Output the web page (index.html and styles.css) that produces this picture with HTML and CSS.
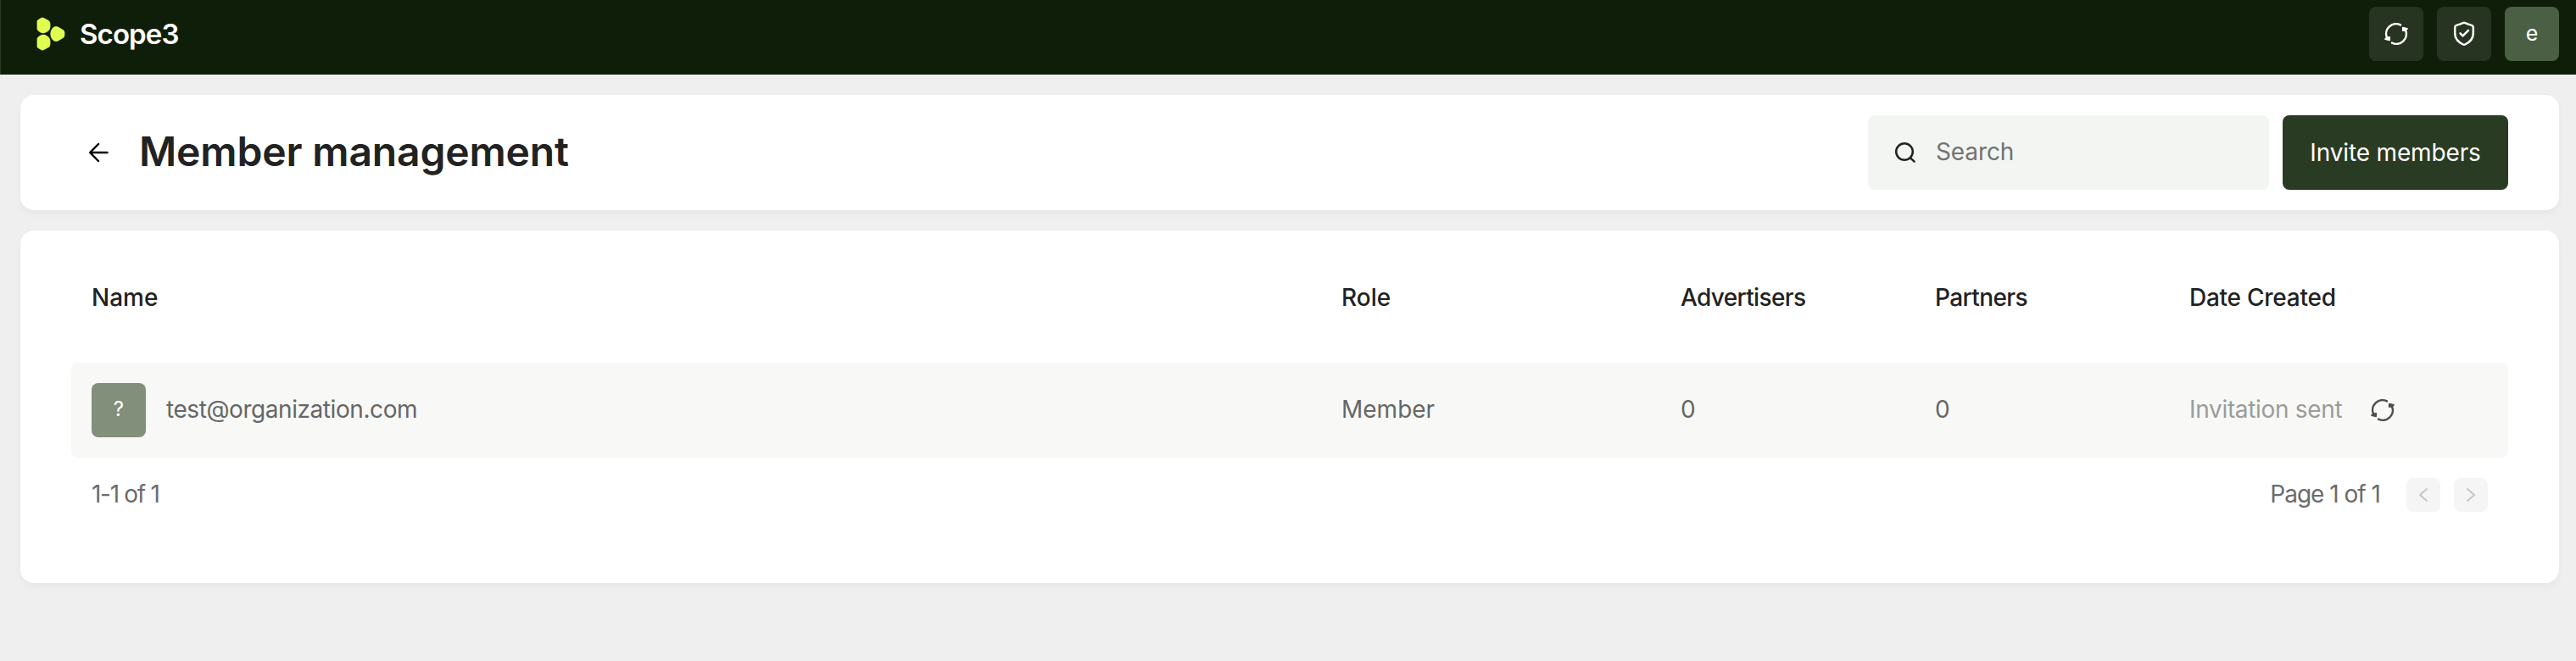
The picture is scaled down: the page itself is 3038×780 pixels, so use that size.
FILE: index.html
```html
<!DOCTYPE html>
<html lang="en">
<head>
    <meta charset="UTF-8">
    <meta name="viewport" content="width=device-width, initial-scale=1.0">
    <title>Scope3 - Member management</title>
    <link rel="stylesheet" href="styles.css">
</head>
<body>

    <header class="topbar">
        <a class="brand" href="#">
            <svg class="brand-logo" viewBox="43 20 34 40" width="34" height="40">
                <path d="M43.6 25.3Q43.6 24.2 44.5 23.6L48.5 21.1Q50 20.1 51.6 20.9L56.8 23.7Q59.4 25.1 59.4 28V31.5Q59.2 35.5 55.4 37.8Q51.2 40.3 47.4 38.2Q44.5 36.6 43.6 34.6Z"/>
                <path d="M43.6 54.7Q43.6 55.8 44.5 56.4L48.5 58.9Q50 59.9 51.6 59.1L56.8 56.3Q59.4 54.9 59.4 52V48.5Q59.2 44.5 55.4 42.2Q51.2 39.7 47.4 41.8Q44.5 43.4 43.6 45.4Z"/>
                <path d="M59.3 40Q59.3 35.8 62 33.1Q65 29.8 68.7 31.7L74.3 35Q76.3 36.2 76.3 38.3V41.7Q76.3 43.8 74.3 45L68.7 48.3Q65 50.2 62 46.9Q59.3 44.2 59.3 40Z"/>
            </svg>
            <span class="brand-name">Scope3</span>
        </a>
        <nav class="topbar-actions">
            <button class="icon-button" aria-label="Refresh">
                <svg class="icon" viewBox="-16 -16 32 32" width="32" height="32">
                    <path d="M-11 4.4A11.7 11.7 0 0 1 5 -10.6M11 -4.4A11.7 11.7 0 0 1 -5 10.6"/>
                    <path class="arrowhead" d="M7.8 -7.4L13 -6.2L10.9 -4.2L7.7 -3.8ZM-7.8 7.4L-13 6.2L-10.9 4.2L-7.7 3.8Z"/>
                </svg>
            </button>
            <button class="icon-button" aria-label="Security">
                <svg class="icon" viewBox="-16 -16 32 32" width="32" height="32">
                    <path d="M-1.4 -12.9Q0 -13.5 1.4 -12.9Q5 -11.3 9 -10.1Q10.8 -9.5 10.8 -7.6V-.5C10.8 6.3 5.4 10.4 1.2 12.5Q0 13.1 -1.2 12.5C-5.4 10.4 -10.8 6.3 -10.8 -.5V-7.6Q-10.8 -9.5 -9 -10.1Q-5 -11.3 -1.4 -12.9Z"/>
                    <path d="M-4.5 -.7L-1.5 2.3L5 -4.2"/>
                </svg>
            </button>
            <button class="icon-button user-button">e</button>
        </nav>
    </header>

    <main>
        <section class="card title-card">
            <a class="back-link" href="#" aria-label="Back">
                <svg class="icon" viewBox="0 0 32 32" width="32" height="32">
                    <path d="M26.5 16H6.5M16 6L6.2 16L16 26"/>
                </svg>
            </a>
            <h1>Member management</h1>
            <label class="search">
                <svg class="icon" viewBox="0 0 32 32" width="32" height="32">
                    <circle cx="14" cy="15" r="9.8"/>
                    <path d="M21 22.3L25.6 26.7"/>
                </svg>
                <input type="text" placeholder="Search">
            </label>
            <button class="invite-button">Invite members</button>
        </section>

        <section class="card table-card">
            <div class="row table-head">
                <span>Name</span>
                <span>Role</span>
                <span class="advertisers">Advertisers</span>
                <span class="partners">Partners</span>
                <span class="date">Date Created</span>
            </div>
            <div class="row member-row">
                <div class="member">
                    <span class="avatar">?</span>
                    <span class="email">test@organization.com</span>
                </div>
                <span>Member</span>
                <span>0</span>
                <span>0</span>
                <div class="status">
                    <span>Invitation sent</span>
                    <svg class="icon resend" viewBox="-16 -16 32 32" width="32" height="32">
                        <path d="M-11 4.4A11.7 11.7 0 0 1 5 -10.6M11 -4.4A11.7 11.7 0 0 1 -5 10.6"/>
                        <path class="arrowhead" d="M7.8 -7.4L13 -6.2L10.9 -4.2L7.7 -3.8ZM-7.8 7.4L-13 6.2L-10.9 4.2L-7.7 3.8Z"/>
                    </svg>
                </div>
            </div>
            <div class="pagination">
                <span class="range">1-1 of 1</span>
                <span class="page">Page 1 of 1</span>
                <button class="page-button" aria-label="Previous page" disabled>
                    <svg class="icon" viewBox="0 0 40 40" width="40" height="40"><path d="M24 13L16 20L24 27"/></svg>
                </button>
                <button class="page-button" aria-label="Next page" disabled>
                    <svg class="icon" viewBox="0 0 40 40" width="40" height="40"><path d="M16 13L24 20L16 27"/></svg>
                </button>
            </div>
        </section>
    </main>

</body>
</html>
```
FILE: styles.css
```css
* {
    box-sizing: border-box;
}

body {
    margin: 0;
    min-height: 100vh;
    background-color: #efefef;
    color: #222222;
    font-family: Inter, 'Liberation Sans', sans-serif;
    font-size: 28px;
    line-height: 40px;
}

button, input {
    border: none;
    padding: 0;
    font: inherit;
    color: inherit;
    background: none;
}

.icon {
    flex: none;
    display: block;
    fill: none;
    stroke: currentColor;
    stroke-width: 2.5;
    stroke-linecap: round;
    stroke-linejoin: round;
}

.icon .arrowhead {
    fill: currentColor;
    stroke-width: 1.6;
}

/* Top bar */
.topbar {
    display: flex;
    align-items: center;
    justify-content: space-between;
    height: 88px;
    padding: 0 20px 8px 42px;
    border-left: 1px solid #2b3827;
    background-color: #0f1e09;
}

.brand {
    display: flex;
    align-items: center;
    gap: 17px;
    color: #ffffff;
    text-decoration: none;
}

.brand-logo {
    fill: #e0fd52;
}

.brand-name {
    font-size: 33px;
    font-weight: 600;
    letter-spacing: -0.9px;
}

.topbar-actions {
    display: flex;
    gap: 16px;
}

.icon-button {
    display: flex;
    align-items: center;
    justify-content: center;
    width: 64px;
    height: 64px;
    border-radius: 8px;
    background-color: #273421;
    color: #ffffff;
}

.user-button {
    padding-bottom: 3px;
    background-color: #4a5f44;
    font-size: 25px;
}

/* Cards */
main {
    display: flex;
    flex-direction: column;
    gap: 24px;
    padding: 24px 20px 0 24px;
}

.card {
    background-color: #ffffff;
    border-radius: 16px;
    box-shadow: 0 4px 8px rgba(0, 0, 0, 0.04);
}

.title-card {
    display: flex;
    align-items: center;
    height: 136px;
    padding: 0 60px 0 76px;
}

.back-link {
    color: #000000;
}

h1 {
    flex: 1;
    margin: 0 0 2px 32px;
    font-size: 48px;
    font-weight: 600;
    line-height: 60px;
    letter-spacing: -0.15px;
}

.search {
    display: flex;
    align-items: center;
    gap: 19px;
    width: 473px;
    height: 88px;
    margin-right: 16px;
    padding-left: 29px;
    border-radius: 8px;
    background-color: #f3f5f2;
}

.search input {
    width: 300px;
    height: 40px;
    margin-bottom: 2px;
    outline: none;
}

.search input::placeholder {
    color: #727371;
    opacity: 1;
    letter-spacing: -0.1px;
}

.invite-button {
    width: 266px;
    height: 88px;
    padding-bottom: 1px;
    border-radius: 8px;
    background-color: #2a3b23;
    color: #ffffff;
    letter-spacing: -0.15px;
}

/* Members table */
.table-card {
    height: 416px;
    padding: 0 60px;
}

.row {
    display: grid;
    grid-template-columns: 1474px 400px 300px 300px 1fr;
    align-items: center;
    padding-left: 24px;
}

.table-head {
    height: 156px;
    padding-top: 2px;
    font-weight: 500;
}

.advertisers {
    letter-spacing: -0.65px;
}

.partners {
    letter-spacing: -0.6px;
}

.date {
    letter-spacing: -0.25px;
}

.member-row {
    height: 112px;
    border-radius: 8px;
    background-color: #f8f8f6;
    color: #666765;
}

.member-row > span, .email, .status span {
    padding-bottom: 2px;
}

.member, .status {
    display: flex;
    align-items: center;
}

.avatar {
    display: flex;
    align-items: center;
    justify-content: center;
    width: 64px;
    height: 64px;
    margin-right: 24px;
    padding-bottom: 2px;
    border-radius: 8px;
    background-color: #818f7b;
    color: #ffffff;
    font-size: 24px;
}

.email {
    letter-spacing: -0.43px;
}

.status span {
    color: #9b9c9a;
    letter-spacing: -0.32px;
}

.resend {
    margin-left: 32px;
    color: #4d4e4c;
}

.pagination {
    display: flex;
    align-items: center;
    margin-top: 24px;
    padding: 0 24px;
    color: #6b6b6b;
}

.range, .page {
    padding-bottom: 2px;
    line-height: 38px;
    letter-spacing: -1px;
}

.range {
    flex: 1;
    letter-spacing: -1.3px;
}

.page-button {
    width: 40px;
    height: 40px;
    margin-left: 16px;
    border-radius: 8px;
    background-color: #f5f5f5;
    color: #c6c6c6;
}

.page + .page-button {
    margin-left: 31px;
}

.page-button .icon {
    stroke-width: 2;
}
```
